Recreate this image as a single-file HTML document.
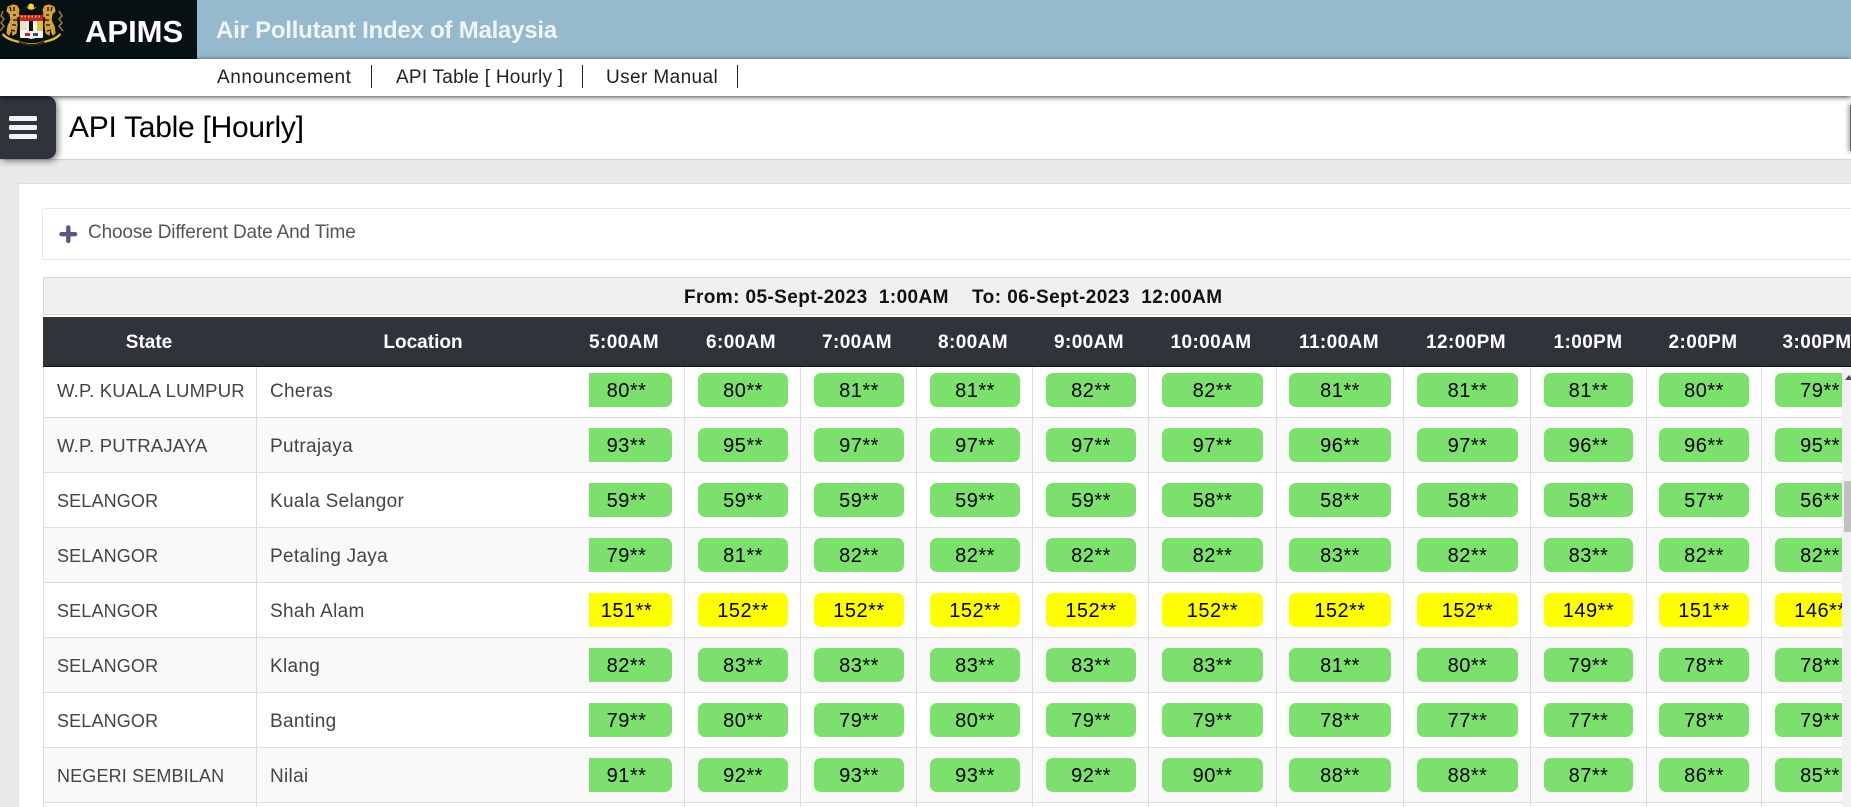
<!DOCTYPE html>
<html lang="en"><head><meta charset="utf-8"><title>APIMS</title>
<style>
*{box-sizing:border-box}
html,body{margin:0;padding:0;width:1851px;height:807px;overflow:hidden;background:#e9e9e9;font-family:"Liberation Sans",sans-serif}
.abs,.t{position:absolute;white-space:nowrap}
.t{line-height:1}
#hdr{left:0;top:0;width:1851px;height:59px;background:#97b9cd}
#blk{left:0;top:0;width:197px;height:59px;background:#061114}
#nav{left:0;top:59px;width:1851px;height:37px;background:#fff;box-shadow:0 1px 5px rgba(0,0,0,.75);z-index:3}
.sep{position:absolute;top:6px;width:1px;height:23px;background:#222}
#title{left:0;top:96px;width:1851px;height:64px;background:#fff;border-bottom:1px solid #d4d4d4}
#ham{left:0;top:96px;width:56px;height:63px;background:#2f343b;border-radius:0 9px 9px 0;box-shadow:2px 2px 7px rgba(0,0,0,.5);z-index:2}
#ham i{position:absolute;left:9px;width:28px;height:5px;background:#f2f2f2;border-radius:1.5px}
#rs{left:1850px;top:105px;width:1px;height:46px;background:#666;box-shadow:0 0 5px 1px rgba(0,0,0,.55)}
#panel{left:18px;top:183px;width:1833px;height:624px;background:#fff;border-left:1px solid #dedede;border-top:1px solid #dedede}
#box{left:42px;top:208px;width:1809px;height:52px;border:1px solid #e6e6e6;border-right:0;border-radius:3px 0 0 3px;background:#fff}
#cap{left:43px;top:277px;width:1808px;height:38px;background:#f0f0f0;border:1px solid #d8d8d8;border-right:0}
#th{left:43px;top:317px;width:1808px;height:50px;background:#30343a;border-bottom:1px solid #111;z-index:2}
.h{position:absolute;top:0;line-height:51px;height:49px;font-size:19px;font-weight:bold;color:#fff;text-align:center;width:120px;letter-spacing:.4px}
.h.n{letter-spacing:0}
#tb{left:0;top:367px;width:1842px;height:440px;overflow:hidden}
.r{position:absolute;left:43px;width:1799px;height:55px;background:#fff;border-bottom:1px solid #ddd}
.r.o{background:#f9f9f9}
.s,.l{position:absolute;top:18px;line-height:21px;color:#444;white-space:nowrap}
.s{left:14px;font-size:18px;letter-spacing:.15px}
.s.w{font-size:18.5px;letter-spacing:.18px;top:17px}
.l{left:227px;font-size:19px;letter-spacing:.3px}
.b{position:absolute;top:10px;height:34px;line-height:36px;font-size:20px;letter-spacing:.5px;text-align:center;color:#000;background:#7ce06c;border-radius:7px}
.y .b{background:#ff0}
.c0{left:546px;width:83px;border-radius:0 7px 7px 0;padding-right:8px}
.c1{left:655px;width:90px}.c2{left:771px;width:90px}.c3{left:887px;width:90px}.c4{left:1003px;width:90px}
.c5{left:1119px;width:101px}.c6{left:1246px;width:102px}.c7{left:1374px;width:101px}.c8{left:1501px;width:89px}
.c9{left:1616px;width:90px}.c10{left:1732px;width:90px}
.v{position:absolute;top:0;width:1px;height:440px;background:#dcdcdc;z-index:1}
#sb{left:1842px;top:367px;width:9px;height:440px;background:#f1f1f1}
#sb b{position:absolute;left:2px;top:114px;width:7px;height:51px;background:#c1c1c1}
#sb u{position:absolute;left:3px;top:8px;width:0;height:0;border-left:4px solid transparent;border-right:4px solid transparent;border-bottom:5px solid #505050}
</style></head><body>
<div class="abs" id="hdr"></div>
<div class="abs" id="blk">
<svg width="66" height="58" viewBox="0 0 66 58" style="position:absolute;left:0;top:0">
<circle cx="31" cy="6.500" r="3" fill="#f2d640"/><path d="M26 6a5.500 5.500 0 0 0 10.500 0a6 4.500 0 0 1-10.500 0z" fill="#ecc838"/>
<path d="M8 7l5-2 4 1 2 4-1 3 1 3-2 1-1-2 1 10-1 8-3 2-1-7-3 7-2-2 1-7 3-6-1-6-3-3z" fill="#d8a03a" stroke="#d8a03a" stroke-width="1.200"/>
<path d="M54 7l-5-2-4 1-2 4 1 3-1 3 2 1 1-2-1 10 1 8 3 2 1-7 3 7 2-2-1-7-3-6 1-6 3-3z" fill="#d8a03a" stroke="#d8a03a" stroke-width="1.200"/>
<path d="M10 7l1 4M14 7l0 4M13 15l3 0M13 20l4 0M12 25l4 0M11 30l4 1M52 7l-1 4M48 7l0 4M49 15l-3 0M49 20l-4 0M50 25l-4 0M51 30l-4 1" stroke="#15100a" stroke-width="1.300"/>
<path d="M3 11l-2 5 3 3-3 4 3 3-4 5M59 11l3 5-3 3 3 4-3 3 4 5" stroke="#a98238" stroke-width="1.400" fill="none"/>
<rect x="20" y="15" width="23" height="23" fill="#f4f4f4" rx="1"/>
<rect x="19.500" y="15" width="24" height="6" fill="#c8202a"/>
<path d="M21 16.500h1.500M24.500 16.500h1.500M28 16.500h1.500M31.500 16.500h1.500M35 16.500h1.500M38.500 16.500h1.500" stroke="#f2d040" stroke-width="2"/>
<rect x="20" y="21" width="5" height="9" fill="#efe4b0"/><rect x="25" y="21" width="4" height="9" fill="#e6e6e6"/>
<rect x="29" y="21" width="4" height="10" fill="#111"/><rect x="33" y="21" width="4" height="10" fill="#f5f5f5"/><rect x="37" y="21" width="6" height="10" fill="#d8c438"/>
<path d="M20 31h23v1c0 3-6 6-11.500 7-5.500-1-11.500-4-11.500-7z" fill="#f2f2f2"/><path d="M25 33h5v3h-5z" fill="#c8202a"/><path d="M33 33h5v3h-5z" fill="#3c4a8a"/>
<path d="M3 33c5 5 12 7 17 8 6 3 17 3 23 0 5-1 12-3 17-8l1 2c-4 5-12 7-17 8-7 4-19 4-25 0-5-1-13-3-17-8z" fill="#e2bd2c"/>
<path d="M19 41c8 4 17 4 25 0l1 3c-8 3-18 3-26 0z" fill="#25200e"/>
</svg>
<span class="t" style="left:85px;top:16px;font-size:31px;font-weight:bold;color:#fff;letter-spacing:0">APIMS</span>
</div>
<span class="t" style="left:216px;top:19px;font-size:24px;font-weight:bold;color:#eef4f7;z-index:1;letter-spacing:-.23px">Air Pollutant Index of Malaysia</span>
<div class="abs" id="nav">
<span class="t" style="left:217px;top:9px;font-size:19px;color:#222;letter-spacing:.55px">Announcement</span><i class="sep" style="left:371px"></i>
<span class="t" style="left:396px;top:9px;font-size:19px;color:#222;letter-spacing:.25px">API Table [ Hourly ]</span><i class="sep" style="left:582px"></i>
<span class="t" style="left:606px;top:9px;font-size:19px;color:#222;letter-spacing:.4px">User Manual</span><i class="sep" style="left:737px"></i>
</div>
<div class="abs" id="title"><span class="t" style="left:69px;top:17px;font-size:30px;color:#000;letter-spacing:-.27px">API Table [Hourly]</span></div>
<div class="abs" id="ham"><i style="top:20px"></i><i style="top:29px"></i><i style="top:38px"></i></div>
<div class="abs" id="rs"></div>
<div class="abs" id="panel"></div>
<div class="abs" id="box">
<svg width="20" height="20" viewBox="0 0 20 20" style="position:absolute;left:16px;top:16px"><path d="M9.300 2.400V16M2.500 9.200H16.100" stroke="#5f5490" stroke-width="4.400" stroke-linecap="round"/></svg>
<span class="t" style="left:45px;top:14px;font-size:19px;color:#555;letter-spacing:-.15px">Choose Different Date And Time</span>
</div>
<div class="abs" id="cap"><span class="t" style="left:640px;top:10px;font-size:19px;font-weight:bold;color:#111;white-space:pre;letter-spacing:.4px">From: 05-Sept-2023  1:00AM</span><span class="t" style="left:928px;top:10px;font-size:19px;font-weight:bold;color:#111;white-space:pre;letter-spacing:.45px">To: 06-Sept-2023  12:00AM</span></div>
<div class="abs" id="th">
<span class="h n" style="left:46px">State</span><span class="h n" style="left:320px">Location</span>
<span class="h" style="left:521px">5:00AM</span><span class="h" style="left:638px">6:00AM</span><span class="h" style="left:754px">7:00AM</span><span class="h" style="left:870px">8:00AM</span><span class="h" style="left:986px">9:00AM</span><span class="h" style="left:1108px">10:00AM</span><span class="h" style="left:1236px">11:00AM</span><span class="h" style="left:1363px">12:00PM</span><span class="h" style="left:1485px">1:00PM</span><span class="h" style="left:1600px">2:00PM</span><span class="h" style="left:1714px">3:00PM</span>
</div>
<div class="abs" id="tb">
<i class="v" style="left:43px"></i><i class="v" style="left:256px"></i><i class="v" style="left:684px"></i><i class="v" style="left:800px"></i><i class="v" style="left:916px"></i><i class="v" style="left:1032px"></i><i class="v" style="left:1148px"></i><i class="v" style="left:1276px"></i><i class="v" style="left:1403px"></i><i class="v" style="left:1530px"></i><i class="v" style="left:1646px"></i><i class="v" style="left:1761px"></i>
<div class="r" style="top:-4px"><span class="s w">W.P. KUALA LUMPUR</span><span class="l">Cheras</span><span class="b c0">80**</span><span class="b c1">80**</span><span class="b c2">81**</span><span class="b c3">81**</span><span class="b c4">82**</span><span class="b c5">82**</span><span class="b c6">81**</span><span class="b c7">81**</span><span class="b c8">81**</span><span class="b c9">80**</span><span class="b c10">79**</span></div>
<div class="r o" style="top:51px"><span class="s w">W.P. PUTRAJAYA</span><span class="l">Putrajaya</span><span class="b c0">93**</span><span class="b c1">95**</span><span class="b c2">97**</span><span class="b c3">97**</span><span class="b c4">97**</span><span class="b c5">97**</span><span class="b c6">96**</span><span class="b c7">97**</span><span class="b c8">96**</span><span class="b c9">96**</span><span class="b c10">95**</span></div>
<div class="r" style="top:106px"><span class="s">SELANGOR</span><span class="l">Kuala Selangor</span><span class="b c0">59**</span><span class="b c1">59**</span><span class="b c2">59**</span><span class="b c3">59**</span><span class="b c4">59**</span><span class="b c5">58**</span><span class="b c6">58**</span><span class="b c7">58**</span><span class="b c8">58**</span><span class="b c9">57**</span><span class="b c10">56**</span></div>
<div class="r o" style="top:161px"><span class="s">SELANGOR</span><span class="l">Petaling Jaya</span><span class="b c0">79**</span><span class="b c1">81**</span><span class="b c2">82**</span><span class="b c3">82**</span><span class="b c4">82**</span><span class="b c5">82**</span><span class="b c6">83**</span><span class="b c7">82**</span><span class="b c8">83**</span><span class="b c9">82**</span><span class="b c10">82**</span></div>
<div class="r y" style="top:216px"><span class="s">SELANGOR</span><span class="l">Shah Alam</span><span class="b c0">151**</span><span class="b c1">152**</span><span class="b c2">152**</span><span class="b c3">152**</span><span class="b c4">152**</span><span class="b c5">152**</span><span class="b c6">152**</span><span class="b c7">152**</span><span class="b c8">149**</span><span class="b c9">151**</span><span class="b c10">146**</span></div>
<div class="r o" style="top:271px"><span class="s">SELANGOR</span><span class="l">Klang</span><span class="b c0">82**</span><span class="b c1">83**</span><span class="b c2">83**</span><span class="b c3">83**</span><span class="b c4">83**</span><span class="b c5">83**</span><span class="b c6">81**</span><span class="b c7">80**</span><span class="b c8">79**</span><span class="b c9">78**</span><span class="b c10">78**</span></div>
<div class="r" style="top:326px"><span class="s">SELANGOR</span><span class="l">Banting</span><span class="b c0">79**</span><span class="b c1">80**</span><span class="b c2">79**</span><span class="b c3">80**</span><span class="b c4">79**</span><span class="b c5">79**</span><span class="b c6">78**</span><span class="b c7">77**</span><span class="b c8">77**</span><span class="b c9">78**</span><span class="b c10">79**</span></div>
<div class="r o" style="top:381px"><span class="s">NEGERI SEMBILAN</span><span class="l">Nilai</span><span class="b c0">91**</span><span class="b c1">92**</span><span class="b c2">93**</span><span class="b c3">93**</span><span class="b c4">92**</span><span class="b c5">90**</span><span class="b c6">88**</span><span class="b c7">88**</span><span class="b c8">87**</span><span class="b c9">86**</span><span class="b c10">85**</span></div>
<div class="r" style="top:436px;height:4px;border:0"></div>
</div>
<div class="abs" id="sb"><u></u><b></b></div>
</body></html>
